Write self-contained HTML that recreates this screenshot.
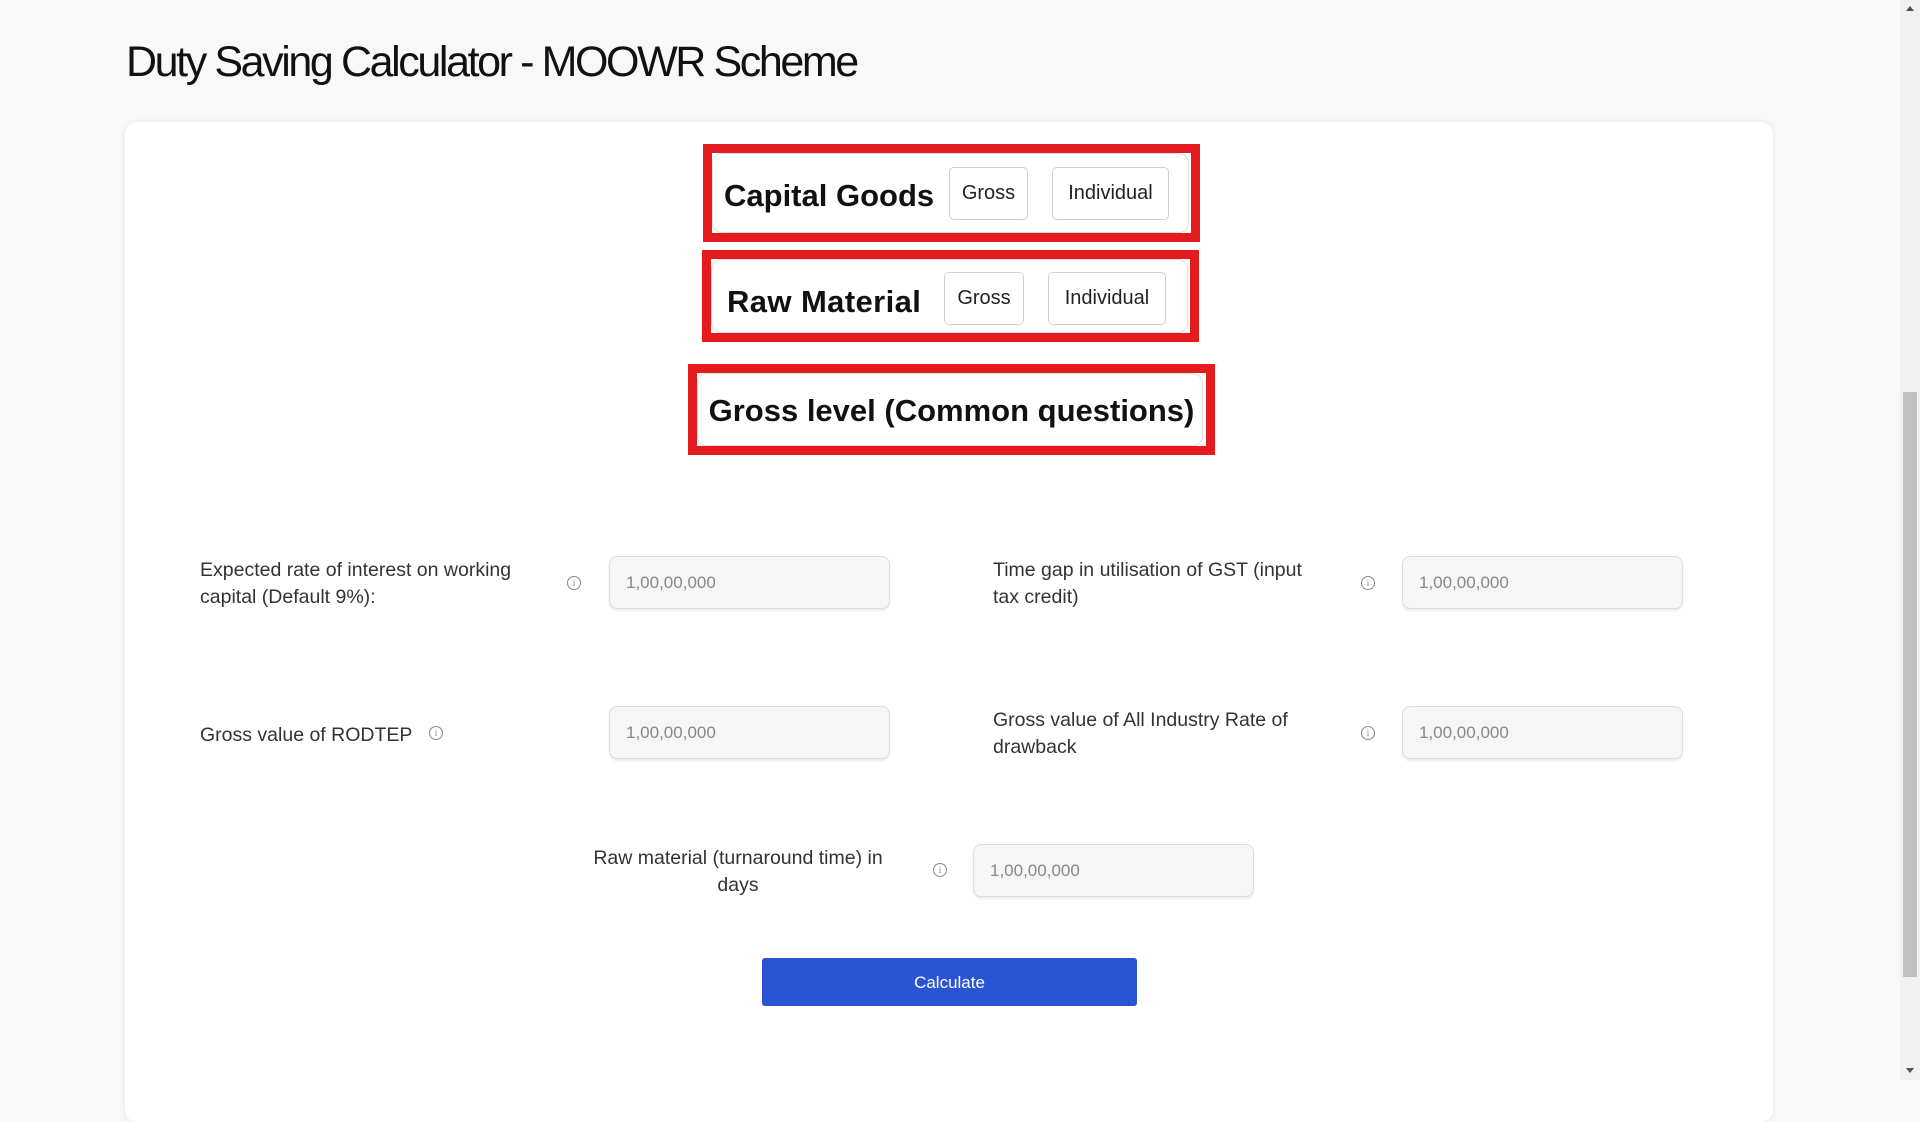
<!DOCTYPE html>
<html><head><meta charset="utf-8"><style>
*{box-sizing:border-box;margin:0;padding:0}
body{width:1920px;height:1080px;overflow:hidden;background:#f8f8f8;font-family:"Liberation Sans",sans-serif;color:#222;position:relative}
.abs{position:absolute}
h1{position:absolute;left:126px;top:38px;font-size:43px;font-weight:400;letter-spacing:-2.4px;color:#111}
.card{position:absolute;left:125px;top:122px;width:1648px;height:1000px;background:#fff;border-radius:12px;box-shadow:0 0 6px rgba(0,0,0,.08)}
.red{position:absolute;border:9px solid #e31b1f}
.inner{position:absolute;border:1px solid #ddd;border-radius:10px;background:#fff}
.hd{position:absolute;font-weight:700;color:#111;white-space:nowrap}
.btn{position:absolute;border:1px solid #d0d0d0;border-radius:5px;background:#fff;font-size:20px;display:flex;align-items:center;justify-content:center;color:#222}
.lbl{position:absolute;font-size:19.5px;line-height:27px;color:#333}
.inp{position:absolute;width:281px;height:53px;background:#f6f6f6;border:1px solid #ddd;border-radius:8px;box-shadow:0 2px 2px rgba(0,0,0,.08);font-size:17px;color:#888;padding-left:16px;line-height:51px}
.ic{position:absolute;width:14px;height:14px;border:1px solid #888;border-radius:50%;font-size:9px;line-height:12px;text-align:center;color:#888;font-family:"Liberation Serif",serif}
</style></head><body>
<h1>Duty Saving Calculator - MOOWR Scheme</h1>
<div class="card"></div>

<div class="red" style="left:703px;top:144px;width:497px;height:98px"></div>
<div class="inner" style="left:712px;top:153px;width:477px;height:80px"></div>
<div class="hd" style="left:724px;top:178px;font-size:31px">Capital Goods</div>
<div class="btn" style="left:949px;top:167px;width:79px;height:53px">Gross</div>
<div class="btn" style="left:1052px;top:167px;width:117px;height:53px">Individual</div>

<div class="red" style="left:702px;top:250px;width:497px;height:92px"></div>
<div class="inner" style="left:711px;top:259px;width:477px;height:74px"></div>
<div class="hd" style="left:727px;top:284px;font-size:31px;letter-spacing:.4px">Raw Material</div>
<div class="btn" style="left:944px;top:272px;width:80px;height:53px">Gross</div>
<div class="btn" style="left:1048px;top:272px;width:118px;height:53px">Individual</div>

<div class="red" style="left:688px;top:364px;width:527px;height:91px"></div>
<div class="inner" style="left:697px;top:373px;width:506px;height:73px"></div>
<div class="hd" style="left:688px;width:527px;text-align:center;top:393px;font-size:31px">Gross level (Common questions)</div>

<div class="lbl" style="left:200px;top:557px;width:345px">Expected rate of interest on working capital (Default 9%):</div>
<div class="ic" style="left:567px;top:576px">i</div>
<div class="inp" style="left:609px;top:556px">1,00,00,000</div>

<div class="lbl" style="left:993px;top:557px;width:335px">Time gap in utilisation of GST (input tax credit)</div>
<div class="ic" style="left:1361px;top:576px">i</div>
<div class="inp" style="left:1402px;top:556px">1,00,00,000</div>

<div class="lbl" style="left:200px;top:722px">Gross value of RODTEP</div>
<div class="ic" style="left:429px;top:726px">i</div>
<div class="inp" style="left:609px;top:706px">1,00,00,000</div>

<div class="lbl" style="left:993px;top:707px;width:345px">Gross value of All Industry Rate of drawback</div>
<div class="ic" style="left:1361px;top:726px">i</div>
<div class="inp" style="left:1402px;top:706px">1,00,00,000</div>

<div class="lbl" style="left:578px;top:845px;width:320px;text-align:center">Raw material (turnaround time) in days</div>
<div class="ic" style="left:933px;top:863px">i</div>
<div class="inp" style="left:973px;top:844px">1,00,00,000</div>

<div class="abs" style="left:762px;top:958px;width:375px;height:48px;background:#2a54d4;border-radius:3px;color:#fff;font-size:17px;text-align:center;line-height:50px">Calculate</div>

<div class="abs" style="left:1900px;top:0;width:20px;height:1080px;background:#f1f1f1"></div>
<div class="abs" style="left:1903px;top:392px;width:14px;height:585px;background:#c1c1c1"></div>
<div class="abs" style="left:1906px;top:6px;width:0;height:0;border-left:4px solid transparent;border-right:4px solid transparent;border-bottom:5px solid #505050"></div>
<div class="abs" style="left:1906px;top:1068px;width:0;height:0;border-left:4px solid transparent;border-right:4px solid transparent;border-top:5px solid #505050"></div>
</body></html>
